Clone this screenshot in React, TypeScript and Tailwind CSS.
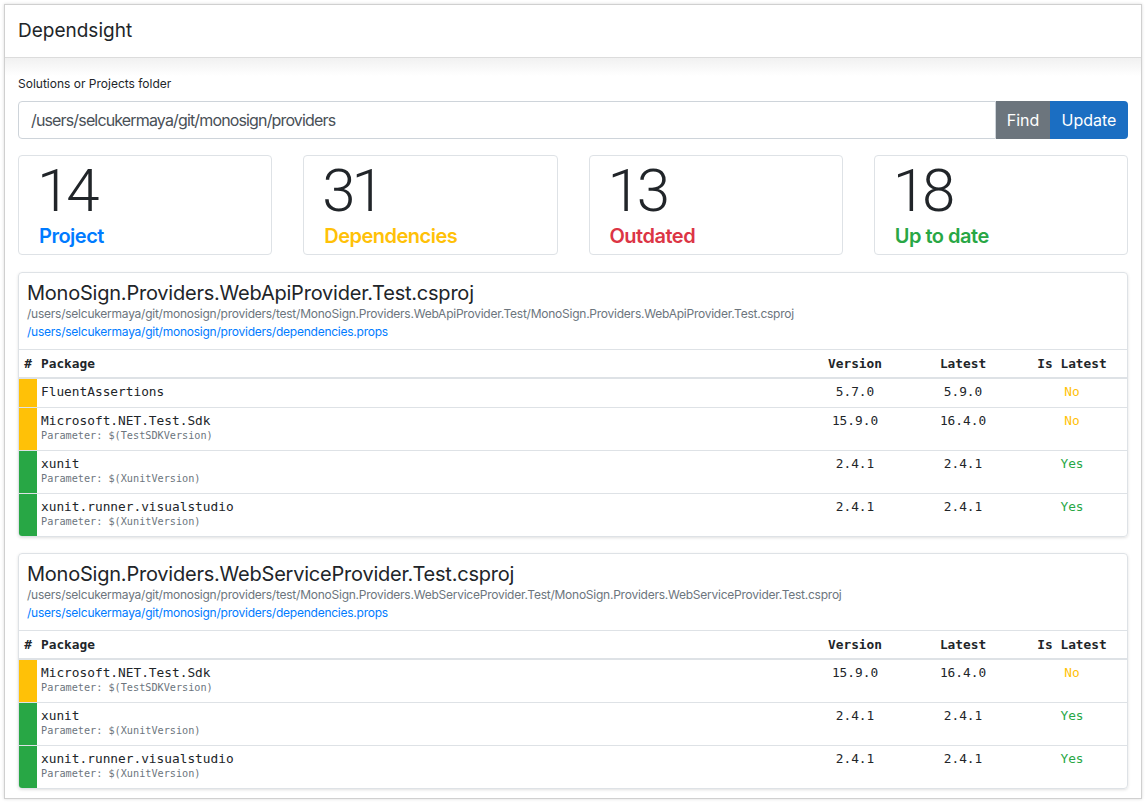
import React from 'react';

type Dep = {
  name: string;
  param?: string;
  version: string;
  latest: string;
};

type Project = {
  title: string;
  path: string;
  props: string;
  deps: Dep[];
};

const BASE = '/users/selcukermaya/git/monosign/providers';

const projects: Project[] = [
  {
    title: 'MonoSign.Providers.WebApiProvider.Test.csproj',
    path: `${BASE}/test/MonoSign.Providers.WebApiProvider.Test/MonoSign.Providers.WebApiProvider.Test.csproj`,
    props: `${BASE}/dependencies.props`,
    deps: [
      { name: 'FluentAssertions', version: '5.7.0', latest: '5.9.0' },
      { name: 'Microsoft.NET.Test.Sdk', param: '$(TestSDKVersion)', version: '15.9.0', latest: '16.4.0' },
      { name: 'xunit', param: '$(XunitVersion)', version: '2.4.1', latest: '2.4.1' },
      { name: 'xunit.runner.visualstudio', param: '$(XunitVersion)', version: '2.4.1', latest: '2.4.1' },
    ],
  },
  {
    title: 'MonoSign.Providers.WebServiceProvider.Test.csproj',
    path: `${BASE}/test/MonoSign.Providers.WebServiceProvider.Test/MonoSign.Providers.WebServiceProvider.Test.csproj`,
    props: `${BASE}/dependencies.props`,
    deps: [
      { name: 'Microsoft.NET.Test.Sdk', param: '$(TestSDKVersion)', version: '15.9.0', latest: '16.4.0' },
      { name: 'xunit', param: '$(XunitVersion)', version: '2.4.1', latest: '2.4.1' },
      { name: 'xunit.runner.visualstudio', param: '$(XunitVersion)', version: '2.4.1', latest: '2.4.1' },
    ],
  },
];

const stats = [
  { value: 14, label: 'Project', color: 'text-[#007bff]' },
  { value: 31, label: 'Dependencies', color: 'text-[#ffc107]' },
  { value: 13, label: 'Outdated', color: 'text-[#dc3545]' },
  { value: 18, label: 'Up to date', color: 'text-[#28a745]' },
];

function StatCard({ value, label, color }: { value: number; label: string; color: string }) {
  return (
    <div className="h-[100px] border border-[#dee2e6] rounded px-5 pt-[2px]">
      <div className="-ml-[2px] text-[60px] leading-[66px] tracking-[-4px] font-light text-[#212529] font-['Roboto',sans-serif]">
        {value}
      </div>
      <div className={`mt-[2px] text-xl leading-5 tracking-[-0.5px] font-semibold ${color}`}>{label}</div>
    </div>
  );
}

function ProjectCard({ project }: { project: Project }) {
  return (
    <div className="border border-[#dee2e6] rounded shadow-[0_1px_3px_rgba(0,0,0,0.12)] overflow-hidden">
      <div className="px-2 pt-[8px] pb-[8px]">
        <h3 className="text-xl leading-6 tracking-[-0.22px] text-[#212529]">{project.title}</h3>
        <div className="text-xs leading-[18px] tracking-[-0.24px] text-[#6c757d]">{project.path}</div>
        <a className="block text-xs leading-[18px] tracking-[-0.24px] text-[#007bff]">{project.props}</a>
      </div>
      <table className="w-full border-collapse font-['DejaVu_Sans_Mono',monospace] text-[12.8px] text-[#212529]">
        <thead>
          <tr className="border-t border-b-2 border-[#dee2e6]">
            <th className="w-[18px] pt-[6px] pb-[5px] leading-4 font-bold text-center">#</th>
            <th className="pl-1 pt-[6px] pb-[5px] leading-4 font-bold text-left">Package</th>
            <th className="w-[108px] pt-[6px] pb-[5px] leading-4 font-bold text-center">Version</th>
            <th className="w-[108px] pt-[6px] pb-[5px] leading-4 font-bold text-center">Latest</th>
            <th className="w-[110px] pt-[6px] pb-[5px] leading-4 font-bold text-center">Is Latest</th>
          </tr>
        </thead>
        <tbody>
          {project.deps.map((d, i) => {
            const ok = d.version === d.latest;
            return (
              <tr key={i} className={i > 0 ? 'border-t border-[#dee2e6]' : ''}>
                <td className={ok ? 'bg-[#28a745]' : 'bg-[#ffc107]'}></td>
                <td className="pl-1 pt-[5px] pb-[7px] align-top">
                  <div className="leading-4">{d.name}</div>
                  {d.param && (
                    <div className="text-[10.2px] leading-[14px] text-[#6c757d]">Parameter: {d.param}</div>
                  )}
                </td>
                <td className="pt-[5px] align-top text-center leading-4">{d.version}</td>
                <td className="pt-[5px] align-top text-center leading-4">{d.latest}</td>
                <td className={`pt-[5px] align-top text-center leading-4 ${ok ? 'text-[#28a745]' : 'text-[#ffc107]'}`}>
                  {ok ? 'Yes' : 'No'}
                </td>
              </tr>
            );
          })}
        </tbody>
      </table>
    </div>
  );
}

export default function App() {
  return (
    <div className="w-[1146px] h-[803px] bg-white p-[4px] font-['Inter',sans-serif] text-[#212529]">
      <div className="h-full border border-[#d0d0d0] shadow-[0_0_3px_rgba(0,0,0,0.15)] flex flex-col">
        {/* Header */}
        <div className="h-[53px] border-b border-[#dcdcdc] flex items-center px-[13px]">
          <span className="text-[19px]">Dependsight</span>
        </div>

        <div className="flex-1 px-[13px] pt-[17px] bg-[linear-gradient(to_bottom,#f1f1f1,#ffffff_18px)]">
          <label className="block text-xs leading-[18px] mb-2">Solutions or Projects folder</label>

          {/* Folder input */}
          <div className="flex h-[38px]">
            <input
              readOnly
              value={BASE}
              className="flex-1 min-w-0 border border-[#ced4da] rounded-l px-3 text-base tracking-[-0.85px] text-[#495057] bg-white outline-none"
            />
            <button className="w-[54px] bg-[#6c757d] text-white text-base">Find</button>
            <button className="w-[78px] bg-[#1b6ec2] text-white text-base rounded-r">Update</button>
          </div>

          {/* Stats */}
          <div className="grid grid-cols-4 gap-[31px] mt-[16px]">
            {stats.map((s) => (
              <StatCard key={s.label} {...s} />
            ))}
          </div>

          {/* Projects */}
          <div className="flex flex-col gap-[16px] mt-[17px]">
            {projects.map((p) => (
              <ProjectCard key={p.title} project={p} />
            ))}
          </div>
        </div>
      </div>
    </div>
  );
}
